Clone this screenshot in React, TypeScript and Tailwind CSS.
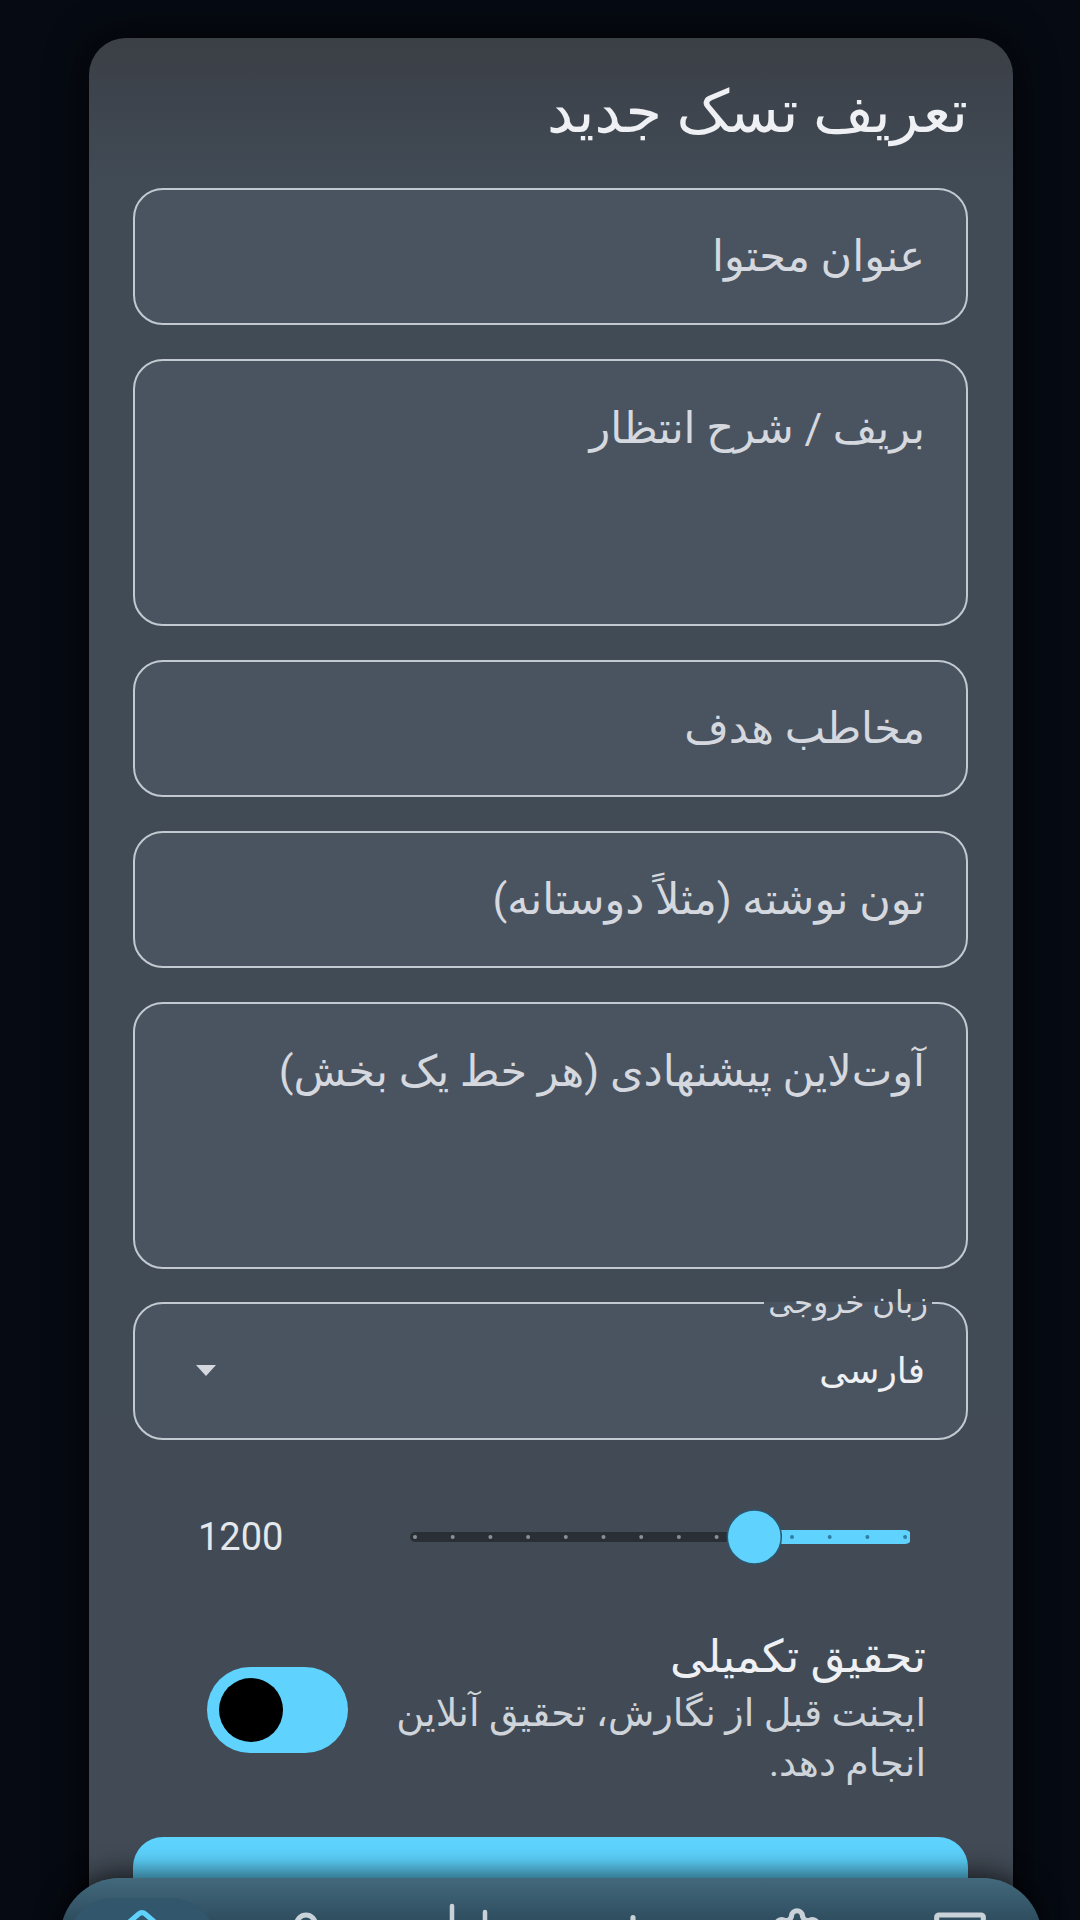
import { House, User, Plus, Settings, Archive } from "lucide-react";

const fields = [
  { label: "عنوان محتوا", multi: false },
  { label: "بریف / شرح انتظار", multi: true },
  { label: "مخاطب هدف", multi: false },
  { label: "تون نوشته (مثلاً دوستانه)", multi: false },
  { label: "آوت‌لاین پیشنهادی (هر خط یک بخش)", multi: true },
];

const Slider = () => {
  // 13 steps, thumb sits on step 9
  const origin = 15;
  const step = 37.7;
  const thumb = origin + step * 9;
  const end = origin + step * 13;
  return (
    <svg width="510" height="60" viewBox="0 0 510 60">
      <line x1={origin} y1="30" x2={thumb} y2="30" stroke="#2a2f35" strokeWidth="10" strokeLinecap="round" />
      <line x1={thumb} y1="30" x2={end} y2="30" stroke="#5fd3fd" strokeWidth="14" strokeLinecap="round" />
      {Array.from({ length: 14 }).map((_, k) => (
        <circle
          key={k}
          cx={origin + step * k}
          cy="30"
          r="2"
          fill={k < 9 ? "#8a9097" : "#2f7fa3"}
        />
      ))}
      <circle cx={thumb} cy="30" r="27" fill="#5fd3fd" stroke="#2b5870" strokeWidth="1.5" />
    </svg>
  );
};

const BarsIcon = () => (
  <svg width="56" height="56" viewBox="0 0 56 56" fill="none" stroke="#c9d1d9" strokeWidth="4.5" strokeLinecap="round">
    <line x1="11" y1="4" x2="11" y2="50" />
    <line x1="44" y1="10" x2="44" y2="50" />
    <line x1="27" y1="22" x2="27" y2="50" />
  </svg>
);

export default function App() {
  return (
    <div
      dir="rtl"
      className="relative h-[1920px] w-[1080px] overflow-hidden bg-[#060a12] font-['Roboto','DejaVu_Sans',sans-serif] text-[#e4e7eb]"
    >
      {/* Card */}
      <div className="pl-[89px] pr-[67px] pt-[38px]" dir="ltr">
        <div
          dir="rtl"
          className="rounded-[37px] bg-linear-to-b from-[#3b3f46] via-[#414b56] via-[7%] to-[#414a55] pb-[200px] pl-[44px] pr-[45px] pt-[42px] shadow-[0_0_40px_rgba(0,0,0,0.7)]"
        >
          <h1 className="text-[59px] leading-[64px] text-[#eef0f3]">تعریف تسک جدید</h1>

          <div className="mt-[44px] flex flex-col gap-[34px]">
            {fields.map((f) =>
              f.multi ? (
                <div
                  key={f.label}
                  className="h-[267px] rounded-[30px] border-2 border-[#c3c9d1] bg-[#4a5461] pr-[41px] pt-[39px] text-[43px] leading-[56px] text-[#d5d9df]"
                >
                  {f.label}
                </div>
              ) : (
                <div
                  key={f.label}
                  className="flex h-[137px] items-center rounded-[30px] border-2 border-[#c3c9d1] bg-[#4a5461] pr-[41px] text-[43px] text-[#d5d9df]"
                >
                  {f.label}
                </div>
              )
            )}

            {/* Language select */}
            <fieldset className="-mt-[15px] h-[152px] rounded-[30px] border-2 border-[#c3c9d1] bg-[#4a5461] pl-[61px] pr-[34px]">
              <legend className="px-[4px] text-[31px] leading-[30px] text-[#d5d9df]">زبان خروجی</legend>
              <div className="flex h-[105px] items-center justify-between pr-[7px]">
                <span className="text-[36px] text-[#eef0f3]">فارسی</span>
                <span className="h-0 w-0 border-x-[10px] border-t-[11px] border-x-transparent border-t-[#d5d9df]" />
              </div>
            </fieldset>
          </div>

          {/* Length slider */}
          <div dir="ltr" className="mt-[67px] flex h-[60px] items-center">
            <span className="w-[267px] pl-[65px] text-[38px] text-[#e4e7eb]">1200</span>
            <Slider />
          </div>

          {/* Research toggle */}
          <div className="mt-[64px] flex items-center justify-between pl-[74px] pr-[42px]">
            <div className="w-[560px]">
              <div className="text-[45px] leading-[52px] text-[#eef0f3]">تحقیق تکمیلی</div>
              <div className="mt-[5px] text-[38px] leading-[50px] text-[#cfd4da]">
                ایجنت قبل از نگارش، تحقیق آنلاین انجام دهد.
              </div>
            </div>
            <div dir="ltr" className="flex h-[86px] w-[141px] items-center rounded-full bg-[#5fd3fd] pl-[12px]">
              <div className="h-[64px] w-[64px] rounded-full bg-black" />
            </div>
          </div>

          <button className="mt-[49px] h-[130px] w-full rounded-[30px] bg-[#5dd3fd]" />
        </div>
      </div>

      {/* Bottom navigation, overlays the card */}
      <nav
        dir="ltr"
        className="absolute left-[60px] right-[38px] top-[1878px] flex h-[160px] items-start rounded-t-[60px] bg-linear-to-b from-[#43697c] via-[#2c4a5c] via-[30%] to-[#1f3546] pt-[20px] shadow-[0_-6px_24px_rgba(0,0,0,0.6)]"
      >
        <div className="flex flex-1 justify-center">
          <div className="flex h-[90px] w-[148px] justify-center rounded-full bg-[#32566b] pt-[10px]">
            <House size={56} color="#5fd3fd" strokeWidth={2.2} />
          </div>
        </div>
        <div className="flex flex-1 justify-center pt-[10px]">
          <User size={56} color="#c9d1d9" strokeWidth={2.2} />
        </div>
        <div className="flex flex-1 justify-center pt-[4px]">
          <BarsIcon />
        </div>
        <div className="flex flex-1 justify-center pt-[8px]">
          <Plus size={56} color="#c9d1d9" strokeWidth={2.2} />
        </div>
        <div className="flex flex-1 justify-center pt-[8px]">
          <Settings size={56} color="#c9d1d9" strokeWidth={2.2} />
        </div>
        <div className="flex flex-1 justify-center pt-[10px]">
          <Archive size={56} color="#c9d1d9" strokeWidth={2.2} />
        </div>
      </nav>
    </div>
  );
}
